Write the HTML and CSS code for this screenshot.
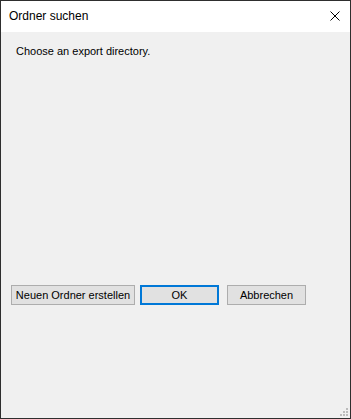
FILE: index.html
```html
<!DOCTYPE html>
<html lang="de">
<head>
  <meta charset="UTF-8">
  <title>Ordner suchen</title>
  <link rel="stylesheet" href="styles.css">
</head>
<body>
  <div class="dialog">
    <div class="titlebar">
      <span class="title">Ordner suchen</span>
      <button class="close" aria-label="Schließen">
        <svg width="10" height="10" viewBox="0 0 10 10"><path d="M0.5 0.5L9.5 9.5M9.5 0.5L0.5 9.5" stroke="#000" stroke-width="1" fill="none"/></svg>
      </button>
    </div>
    <div class="content">
      <p class="prompt">Choose an export directory.</p>
      <div class="buttons">
        <button class="btn new-folder">Neuen Ordner erstellen</button>
        <button class="btn ok">OK</button>
        <button class="btn cancel">Abbrechen</button>
      </div>
    </div>
    <div class="grip">
      <i style="grid-area: 1 / 3"></i>
      <i style="grid-area: 2 / 2"></i>
      <i style="grid-area: 2 / 3"></i>
      <i style="grid-area: 3 / 1"></i>
      <i style="grid-area: 3 / 2"></i>
      <i style="grid-area: 3 / 3"></i>
    </div>
  </div>
</body>
</html>
```

FILE: styles.css
```css
html, body {
  margin: 0;
  height: 100%;
}
body {
  font-family: 'Liberation Sans', Arial, sans-serif;
  font-size: 12px;
  color: #000;
  background: #333;
}
.dialog {
  position: relative;
  box-sizing: border-box;
  width: 351px;
  height: 419px;
  border: 1px solid #2e2e2e;
  background: #f0f0f0;
  display: flex;
  flex-direction: column;
}
.titlebar {
  height: 31px;
  background: #fff;
  display: flex;
  align-items: center;
  justify-content: space-between;
  padding-left: 8px;
}
.title {
  font-size: 12px;
  margin-top: -1px;
}
.close {
  width: 30px;
  height: 31px;
  border: none;
  background: transparent;
  padding: 0;
  display: flex;
  align-items: center;
  justify-content: center;
}
.close svg {
  display: block;
  margin-top: -1px;
}
.content {
  flex: 1;
  padding: 0 10px;
}
.prompt {
  margin: 12px 0 0 5px;
  font-size: 11px;
  line-height: 14px;
}
.buttons {
  display: flex;
  gap: 5px;
  margin-top: 227px;
}
.btn {
  box-sizing: border-box;
  height: 20px;
  padding: 0;
  border: 1px solid #adadad;
  background: #e1e1e1;
  font-family: inherit;
  font-size: 11px;
  color: #000;
}
.new-folder {
  width: 124px;
}
.ok {
  width: 79px;
  border: 2px solid #0078d7;
}
.cancel {
  width: 79px;
  margin-left: 3px;
}
.grip {
  position: absolute;
  right: 2px;
  bottom: 2px;
  display: grid;
  grid-template-columns: repeat(3, 2px);
  grid-template-rows: repeat(3, 2px);
  gap: 1px;
}
.grip i {
  background: #bcbcbc;
}
```
